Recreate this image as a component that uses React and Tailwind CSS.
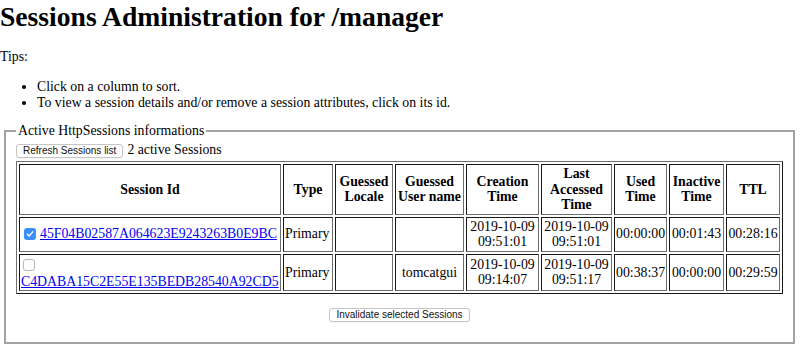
import React from "react";

const HEAD = [
  { key: "id", label: ["Session Id"], w: "" },
  { key: "type", label: ["Type"], w: "w-[50px]" },
  { key: "locale", label: ["Guessed", "Locale"], w: "w-[58px]" },
  { key: "user", label: ["Guessed", "User name"], w: "w-[69px]" },
  { key: "created", label: ["Creation", "Time"], w: "w-[73px]" },
  { key: "accessed", label: ["Last", "Accessed", "Time"], w: "w-[71px]" },
  { key: "used", label: ["Used", "Time"], w: "w-[53px]" },
  { key: "inactive", label: ["Inactive", "Time"], w: "w-[55px]" },
  { key: "ttl", label: ["TTL"], w: "w-[54px]" },
];

const SESSIONS = [
  {
    id: "45F04B02587A064623E9243263B0E9BC",
    checked: true,
    type: "Primary",
    user: "",
    created: ["2019-10-09", "09:51:01"],
    accessed: ["2019-10-09", "09:51:01"],
    used: "00:00:00",
    inactive: "00:01:43",
    ttl: "00:28:16",
  },
  {
    id: "C4DABA15C2E55E135BEDB28540A92CD5",
    checked: false,
    type: "Primary",
    user: "tomcatgui",
    created: ["2019-10-09", "09:14:07"],
    accessed: ["2019-10-09", "09:51:17"],
    used: "00:38:37",
    inactive: "00:00:00",
    ttl: "00:29:59",
  },
];

const cell =
  "border border-[#6e6e6e] [border-style:inset] p-px align-middle";

function Checkbox({ checked }) {
  if (checked) {
    return (
      <span className="inline-grid place-items-center w-[12px] h-[12px] rounded-[3px] bg-[#3b8ff6] shrink-0">
        <svg width="8" height="8" viewBox="0 0 8 8" fill="none">
          <path d="M1.3 4.2 L3.2 6 L6.7 1.8" stroke="white" strokeWidth="1.3" strokeLinecap="round" strokeLinejoin="round" />
        </svg>
      </span>
    );
  }
  return <span className="block w-[12px] h-[12px] rounded-[3px] border border-[#b8b8b8] bg-white" />;
}

function MacButton({ children }) {
  return (
    <button
      type="button"
      className="h-[14px] px-[6px] rounded-[3px] border border-[#c6c6c6] bg-white text-[10px] leading-[12px] text-[#111] shadow-[0_0.5px_0.5px_rgba(0,0,0,0.08)] [font-family:'Liberation_Sans',Arial,sans-serif]"
    >
      {children}
    </button>
  );
}

function Lines({ parts }) {
  return parts.map((p, i) => (
    <React.Fragment key={i}>
      {i > 0 && <br />}
      {p}
    </React.Fragment>
  ));
}

export default function App() {
  return (
    <div className="w-[800px] h-[346px] overflow-hidden bg-white text-black text-[13.8px] leading-[16px] [font-family:'Liberation_Serif','Times_New_Roman',serif]">
      <h1 className="pt-px mb-[16px] text-[27.6px] leading-[32px] font-bold">
        Sessions Administration for /manager
      </h1>
      <p>Tips:</p>
      <ul className="mt-[14px] pl-[37px] list-disc">
        <li>Click on a column to sort.</li>
        <li>To view a session details and/or remove a session attributes, click on its id.</li>
      </ul>

      <fieldset className="mt-[12px] ml-[4px] mr-[5px] border-2 border-[#a3a3a3] px-[10px] pt-[3px] pb-[20px]">
        <legend className="px-[2px]">Active HttpSessions informations</legend>

        <div className="flex items-end h-[16px]">
          <MacButton>Refresh Sessions list</MacButton>
          <span className="ml-[4px]">2 active Sessions</span>
        </div>

        <table className="mt-[3px] w-full table-fixed border-separate border-spacing-[2px] border border-[#6e6e6e] [border-style:outset] leading-[15.5px]">
          <thead>
            <tr>
              {HEAD.map((h) => (
                <th key={h.key} className={`${cell} ${h.w} text-center font-bold`}>
                  <Lines parts={h.label} />
                </th>
              ))}
            </tr>
          </thead>
          <tbody>
            {SESSIONS.map((s) => (
              <tr key={s.id}>
                <td className={cell}>
                  {s.checked ? (
                    <div className="flex items-center">
                      <span className="ml-[3px] mr-[4px]">
                        <Checkbox checked />
                      </span>
                      <a href="#" className="text-[#0000ee] underline whitespace-nowrap">
                        {s.id}
                      </a>
                    </div>
                  ) : (
                    <div>
                      <div className="ml-[2px] my-[3px]">
                        <Checkbox checked={false} />
                      </div>
                      <a href="#" className="text-[#0000ee] underline whitespace-nowrap">
                        {s.id}
                      </a>
                    </div>
                  )}
                </td>
                <td className={cell}>{s.type}</td>
                <td className={cell}></td>
                <td className={`${cell} text-center`}>{s.user}</td>
                <td className={`${cell} text-center`}>
                  <Lines parts={s.created} />
                </td>
                <td className={`${cell} text-center`}>
                  <Lines parts={s.accessed} />
                </td>
                <td className={`${cell} text-center whitespace-nowrap`}>{s.used}</td>
                <td className={`${cell} text-center whitespace-nowrap`}>{s.inactive}</td>
                <td className={`${cell} text-center whitespace-nowrap`}>{s.ttl}</td>
              </tr>
            ))}
          </tbody>
        </table>

        <div className="mt-[14px] flex justify-center">
          <MacButton>Invalidate selected Sessions</MacButton>
        </div>
      </fieldset>
    </div>
  );
}
